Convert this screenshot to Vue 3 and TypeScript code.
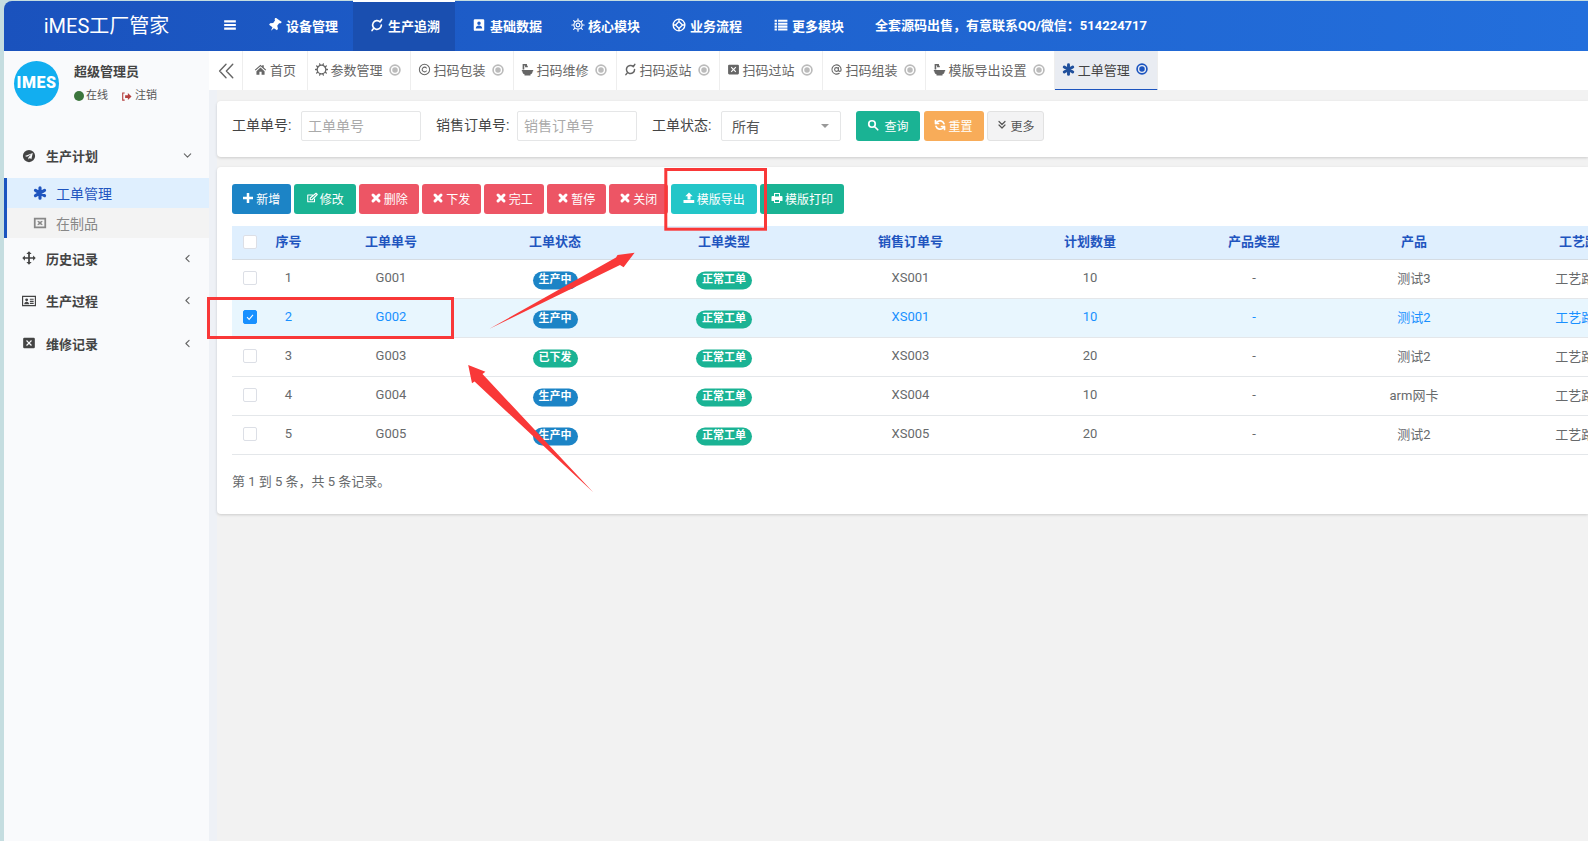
<script setup lang="ts">
import { h } from 'vue'

function cog(inner: number, ring: number, outer: number, n: number): string {
  const circle = (r: number) => `M${12 - r} 12a${r} ${r} 0 1 0 ${2 * r} 0a${r} ${r} 0 1 0 ${-2 * r} 0`
  let d = circle(ring) + (inner ? circle(inner) : '')
  for (let i = 0; i < n; i++) {
    const a = (i * 2 * Math.PI) / n
    d += `M${(12 + ring * Math.cos(a)).toFixed(2)} ${(12 + ring * Math.sin(a)).toFixed(2)}L${(12 + outer * Math.cos(a)).toFixed(2)} ${(12 + outer * Math.sin(a)).toFixed(2)}`
  }
  return d
}

const xCut = 'M8.500 7L12 10.500 15.500 7 17 8.500 13.500 12 17 15.500 15.500 17 12 13.500 8.500 17 7 15.500 10.500 12 7 8.500z'
const icons: Record<string, { d: string; sw?: number; t?: string }> = {
  pin: { d: 'M5.500 1h13v3l-2.500 1.500V11l4 3.500V17.500H13.500L12 24l-1.500-6.500H3.500V14.500l4-3.500V5.500L5.500 4z', t: 'rotate(35 12 12)' },
  notch: { d: 'M17.300 6.700A7.500 7.500 0 1 0 19.500 12M17.300 6.700L20 2.500M6.700 17.300L3.500 21.500', sw: 2.800 },
  book: { d: 'M5 2h14a2 2 0 0 1 2 2v16a2 2 0 0 1-2 2H5a2 2 0 0 1-2-2V4a2 2 0 0 1 2-2zM12 6a3 3 0 1 0 0 6 3 3 0 0 0 0-6zM6.500 18h11c0-3-2.500-5-5.500-5s-5.500 2-5.500 5z' },
  gear: { d: cog(3.2, 7, 10.5, 8), sw: 2 },
  sun: { d: cog(0, 8, 11, 10), sw: 2.400 },
  ring: { d: 'M2 12a10 10 0 1 0 20 0a10 10 0 1 0-20 0M12 6l6 6-6 6-6-6zM12 2v4M12 18v4M2 12h4M18 12h4', sw: 2.400 },
  list: { d: 'M1 3h4v3.500H1zM7 3h16v3.500H7zM1 8h4v3.500H1zM7 8h16v3.500H7zM1 13h4v3.500H1zM7 13h16v3.500H7zM1 18h4v3.500H1zM7 18h16v3.500H7z' },
  bars: { d: 'M2 4h20v3.800H2zM2 10.100h20v3.800H2zM2 16.200h20V20H2z' },
  home: { d: 'M12 3L1.500 12.500 3 14l9-8 9 8 1.500-1.500L18 8.500V4h-3v2zM4.500 15v6.500h5.500V16h4v5.500h5.500V15L12 8.500z' },
  copy: { d: 'M2.500 12a9.500 9.500 0 1 0 19 0a9.500 9.500 0 1 0-19 0M15.500 9.200a4.400 4.400 0 1 0 0 5.600', sw: 1.900 },
  bath: { d: 'M1.500 13h21v2.200h-1c0 3-1.500 5-4 5.600V23H6.500v-2.200c-2.500-.6-4-2.600-4-5.600h-1zM3 2h8v3h1.500v3h-5V4.800H6V12H3z' },
  win: { d: 'M4 3h16a2 2 0 0 1 2 2v14a2 2 0 0 1-2 2H4a2 2 0 0 1-2-2V5a2 2 0 0 1 2-2z' + xCut },
  wino: { d: 'M1.500 3h21v18h-21zM4.500 6v12h15V6zM8.500 8L12 10l3.500-2 1 1.500-2.500 2.500 2.500 2.500-1 1.500-3.500-2-3.500 2-1-1.500L10 12 7.500 9.500z' },
  at: { d: 'M15.500 12a3.500 3.500 0 1 1-7 0 3.500 3.500 0 0 1 7 0zM15.500 8.500V13a2.500 2.500 0 0 0 5 0v-1a8.500 8.500 0 1 0-3.500 6.900', sw: 2 },
  star: { d: 'M12 3v18M4.200 7.500l15.600 9M19.800 7.500l-15.600 9', sw: 5.400 },
  close: { d: 'M12 .5a11.500 11.500 0 1 0 0 23 11.500 11.500 0 0 0 0-23zM12 3.800a8.200 8.200 0 1 1 0 16.400 8.200 8.200 0 0 1 0-16.400zM12 6.500a5.500 5.500 0 1 0 0 11 5.500 5.500 0 0 0 0-11z' },
  plane: { d: 'M12 1.500a10.500 10.500 0 1 0 0 21 10.500 10.500 0 0 0 0-21zM18.500 7L5 12l3.500 1.200L16 9l-5 5v4l2.500-2.500 2.500 2z' },
  move: { d: 'M12 .5l4.500 4.500H13.500v5.500H19V7.500l4.500 4.500-4.500 4.500v-3H13.500V19h3L12 23.500 7.500 19h3v-5.500H5v3L.5 12 5 7.500v3h5.500V5h-3z' },
  card: { d: 'M0 3h24v18H0zM2 5v14h20V5zM8 7.500a2.500 2.500 0 1 0 0 5 2.500 2.500 0 0 0 0-5zM3.800 17.500c0-2.800 1.800-4.300 4.200-4.300s4.200 1.500 4.200 4.300zM13.500 8H20v2h-6.500zM13.500 11.500H20v2h-6.500zM13.500 15H20v2h-6.500z' },
  down: { d: 'M5 8.500l7 7 7-7', sw: 2.400 },
  left: { d: 'M15.500 5l-7 7 7 7', sw: 2.400 },
  dbl: { d: 'M12 3L3.500 12l8.500 9M21 3l-8.500 9 8.500 9', sw: 1.900 },
  plus: { d: 'M9.500 2h5v7.500H22v5h-7.500V22h-5v-7.500H2v-5h7.500z' },
  edit: { d: 'M17 14v5.500H3.500V6H13M20 2.500L22.500 5 12 15.500H8.500V12z', sw: 2.200 },
  times: { d: 'M6 6l12 12M18 6L6 18', sw: 6 },
  up: { d: 'M12 1l7.500 7.500h-4.500V15H9V8.500H4.500zM1 16h21.500v6H1z' },
  print: { d: 'M6 2h12v6h3a2 2 0 0 1 2 2v8h-5v4H6v-4H1v-8a2 2 0 0 1 2-2h3zM8 4v5h8V4zM8 16v4h8v-4z' },
  find: { d: 'M3.500 10a6.500 6.500 0 1 0 13 0a6.500 6.500 0 1 0-13 0M15 15l6.500 6.500', sw: 3.400 },
  sync: { d: 'M20 9.500A8.500 8.500 0 0 0 5.500 6.500L3.500 9M4 14.500a8.500 8.500 0 0 0 14.500 3L20.500 15M3 3v6h6M21 21v-6h-6', sw: 3.400 },
  dd: { d: 'M6 5l6 6 6-6M6 12l6 6 6-6', sw: 2.400 },
  out: { d: 'M8 3H2.500v18H8V18.500H5v-13h3zM9 9h6V4.500l8 7.500-8 7.500V15H9z' },
}

const Ico = (p: { n: string }) => {
  const i = icons[p.n]
  const attrs = i.sw
    ? { fill: 'none', stroke: 'currentColor', 'stroke-width': i.sw, 'stroke-linecap': 'round', 'stroke-linejoin': 'round' }
    : { fill: 'currentColor', 'fill-rule': 'evenodd' }
  return h('svg', { viewBox: '0 0 24 24', class: 'ic' }, [h('path', { d: i.d, transform: i.t, ...attrs })])
}

const navItems = [
  { icon: 'pin', text: '设备管理' },
  { icon: 'notch', text: '生产追溯', active: true },
  { icon: 'book', text: '基础数据' },
  { icon: 'gear', text: '核心模块', tight: true },
  { icon: 'ring', text: '业务流程' },
  { icon: 'list', text: '更多模块' },
]

const tabs = [
  { icon: 'home', text: '首页', home: true },
  { icon: 'sun', text: '参数管理' },
  { icon: 'copy', text: '扫码包装' },
  { icon: 'bath', text: '扫码维修' },
  { icon: 'notch', text: '扫码返站' },
  { icon: 'win', text: '扫码过站' },
  { icon: 'at', text: '扫码组装' },
  { icon: 'bath', text: '模版导出设置' },
  { icon: 'star', text: '工单管理', active: true },
]

const actions = [
  { icon: 'plus', text: '新增', kind: 'blue', w: 58.5 },
  { icon: 'edit', text: '修改', kind: 'green', w: 61.5 },
  { icon: 'times', text: '删除', kind: 'red', w: 59.5 },
  { icon: 'times', text: '下发', kind: 'red', w: 58.5 },
  { icon: 'times', text: '完工', kind: 'red', w: 59.5 },
  { icon: 'times', text: '暂停', kind: 'red', w: 58.5 },
  { icon: 'times', text: '关闭', kind: 'red', w: 58.5 },
  { icon: 'up', text: '模版导出', kind: 'teal', w: 85.5 },
  { icon: 'print', text: '模版打印', kind: 'green', w: 84 },
]

const columns = ['序号', '工单单号', '工单状态', '工单类型', '销售订单号', '计划数量', '产品类型', '产品', '工艺路线']
const colClasses = ['c1', 'c2', 'c3', 'c4', 'c5', 'c6', 'c7', 'c8', 'c9']

const rows = [
  { no: 1, code: 'G001', status: '生产中', type: '正常工单', order: 'XS001', qty: 10, ptype: '-', product: '测试3', route: '工艺路线1' },
  { no: 2, code: 'G002', status: '生产中', type: '正常工单', order: 'XS001', qty: 10, ptype: '-', product: '测试2', route: '工艺路线1', selected: true },
  { no: 3, code: 'G003', status: '已下发', type: '正常工单', order: 'XS003', qty: 20, ptype: '-', product: '测试2', route: '工艺路线1' },
  { no: 4, code: 'G004', status: '生产中', type: '正常工单', order: 'XS004', qty: 10, ptype: '-', product: 'arm网卡', route: '工艺路线1' },
  { no: 5, code: 'G005', status: '生产中', type: '正常工单', order: 'XS005', qty: 20, ptype: '-', product: '测试2', route: '工艺路线1' },
]
</script>

<template>
  <div class="page">
    <header class="topbar">
      <div class="brand">iMES工厂管家</div>
      <div class="burger"><Ico n="bars" /></div>
      <nav class="nav">
        <a v-for="item in navItems" :key="item.text" class="nav-item" :class="{ active: item.active, tight: item.tight }">
          <Ico :n="item.icon" />
          <span>{{ item.text }}</span>
        </a>
        <span class="contact">全套源码出售，有意联系QQ/微信：514224717</span>
      </nav>
    </header>

    <div class="body">
      <aside class="sidebar">
        <div class="user">
          <div class="avatar">IMES</div>
          <div class="user-info">
            <div class="user-name">超级管理员</div>
            <div class="user-meta">
              <i class="dot"></i><span>在线</span>
              <span class="logout"><Ico n="out" /></span><span>注销</span>
            </div>
          </div>
        </div>

        <div class="menu">
          <div class="menu-head">
            <Ico n="plane" /><span class="menu-title">生产计划</span><span class="chev"><Ico n="down" /></span>
          </div>
          <div class="submenu">
            <div class="sub-item current"><Ico n="star" /><span>工单管理</span></div>
            <div class="sub-item"><Ico n="wino" /><span>在制品</span></div>
          </div>
          <div class="menu-head">
            <Ico n="move" /><span class="menu-title">历史记录</span><span class="chev"><Ico n="left" /></span>
          </div>
          <div class="menu-head">
            <Ico n="card" /><span class="menu-title">生产过程</span><span class="chev"><Ico n="left" /></span>
          </div>
          <div class="menu-head">
            <Ico n="win" /><span class="menu-title">维修记录</span><span class="chev"><Ico n="left" /></span>
          </div>
        </div>
      </aside>

      <main class="main">
        <div class="tabbar">
          <div class="collapse"><Ico n="dbl" /></div>
          <div v-for="tab in tabs" :key="tab.text" class="tab" :class="{ active: tab.active, home: tab.home }">
            <Ico :n="tab.icon" />
            <span class="tab-text">{{ tab.text }}</span>
            <span v-if="!tab.home" class="tab-close"><Ico n="close" /></span>
          </div>
        </div>

        <div class="content">
          <section class="card search">
            <label class="lab first">工单单号:</label>
            <input class="field" placeholder="工单单号" />
            <label class="lab">销售订单号:</label>
            <input class="field" placeholder="销售订单号" />
            <label class="lab">工单状态:</label>
            <div class="field select"><span>所有</span><i class="caret"></i></div>
            <div class="search-btns">
              <button class="btn green s-query"><Ico n="find" /><span>查询</span></button>
              <button class="btn orange s-reset"><Ico n="sync" /><span>重置</span></button>
              <button class="btn plain s-more"><Ico n="dd" /><span>更多</span></button>
            </div>
          </section>

          <section class="card list-card">
            <div class="toolbar">
              <button v-for="a in actions" :key="a.text" class="btn" :class="a.kind" :style="{ width: a.w + 'px' }">
                <Ico :n="a.icon" /><span>{{ a.text }}</span>
              </button>
            </div>

            <table class="grid">
              <colgroup>
                <col class="c0" />
                <col v-for="c in colClasses" :key="c" :class="c" />
              </colgroup>
              <thead>
                <tr>
                  <th><span class="check"></span></th>
                  <th v-for="c in columns" :key="c">{{ c }}</th>
                </tr>
              </thead>
              <tbody>
                <tr v-for="r in rows" :key="r.no" :class="{ selected: r.selected }">
                  <td>
                    <span class="check" :class="{ on: r.selected }">
                      <svg v-if="r.selected" viewBox="0 0 14 14" class="tick"><path d="M3.500 7.200l2.500 2.600 4.500-5.300" /></svg>
                    </span>
                  </td>
                  <td>{{ r.no }}</td>
                  <td>{{ r.code }}</td>
                  <td><span class="badge" :class="r.status === '已下发' ? 'b-green' : 'b-blue'">{{ r.status }}</span></td>
                  <td><span class="badge b-green">{{ r.type }}</span></td>
                  <td>{{ r.order }}</td>
                  <td>{{ r.qty }}</td>
                  <td>{{ r.ptype }}</td>
                  <td>{{ r.product }}</td>
                  <td>{{ r.route }}</td>
                </tr>
              </tbody>
            </table>

            <div class="summary">第 1 到 5 条，共 5 条记录。</div>
          </section>
        </div>
      </main>
    </div>

    <svg class="marks" viewBox="0 0 1588 841" width="1588" height="841">
      <rect x="665.800" y="169.500" width="99.700" height="59.700" />
      <rect x="208.500" y="298.500" width="244" height="39" />
      <polygon class="arrow" points="489,329 616,257.500 617.500,255 634.600,252.700 623.600,267.300 620,265" />
      <polygon class="arrow" points="593.200,492.300 474.500,381.500 472,383.300 468.200,365 485.400,371.700 482.500,374" />
    </svg>
  </div>
</template>

<style>
html,
body {
  margin: 0;
  overflow: hidden;
}
</style>

<style scoped>
.page {
  position: relative;
  width: 1588px;
  height: 841px;
  box-sizing: border-box;
  padding: 1px 0 0 4px;
  display: flex;
  flex-direction: column;
  overflow: hidden;
  background: #c5dde0;
  font-family: Roboto, "Noto Sans CJK SC", sans-serif;
  font-size: 13px;
  color: #676a6c;
}
.ic {
  width: 14px;
  height: 14px;
  flex: none;
  display: block;
}

/* top bar */
.topbar {
  height: 50px;
  flex: none;
  display: flex;
  align-items: stretch;
  border-top-left-radius: 8px;
  background: linear-gradient(90deg, #1a52bd 0%, #1f63cf 50%, #236fdc 100%);
  color: #fff;
}
.brand {
  width: 205px;
  flex: none;
  text-align: center;
  line-height: 50px;
  font-size: 20px;
}
.burger {
  width: 42px;
  flex: none;
  display: flex;
  align-items: center;
  padding: 0 0 2px 14px;
  box-sizing: border-box;
}
.burger .ic {
  width: 14px;
  height: 14px;
}
.nav {
  display: flex;
  align-items: stretch;
  font-weight: 700;
}
.nav-item {
  display: flex;
  align-items: center;
  gap: 4px;
  padding: 0 15px 3px 17px;
  border-top: 2px solid transparent;
  margin-top: -1px;
}
.nav-item.tight {
  padding-left: 14px;
  gap: 3px;
}
.nav-item.active {
  border-top-color: #fff;
  background: #1a4fb0;
}
.contact {
  display: flex;
  align-items: center;
  margin-left: 16px;
  padding-bottom: 3px;
  white-space: nowrap;
}

/* frame */
.body {
  flex: 1;
  min-height: 0;
  display: flex;
}
.sidebar {
  width: 205px;
  flex: none;
  background: #f9fafc;
}
.user {
  display: flex;
  padding: 10px 0 0 10px;
  height: 74px;
  box-sizing: border-box;
}
.avatar {
  width: 45px;
  height: 45px;
  border-radius: 50%;
  background: #12aef0;
  color: #fff;
  font-weight: 900;
  font-size: 16px;
  letter-spacing: 0.5px;
  line-height: 44px;
  text-align: center;
  flex: none;
}
.user-info {
  margin-left: 15px;
  padding-top: 1px;
}
.user-name {
  font-size: 13px;
  font-weight: 700;
  color: #444;
  line-height: 20px;
}
.user-meta {
  display: flex;
  align-items: center;
  margin-top: 6px;
  font-size: 11px;
  color: #555;
  line-height: 16px;
}
.dot {
  width: 10px;
  height: 10px;
  border-radius: 50%;
  background: #3c763d;
  margin-right: 2px;
}
.logout {
  color: #b5403f;
  margin: 0 3px 0 13px;
}
.logout .ic {
  width: 11px;
  height: 11px;
}
.menu {
  padding-top: 10px;
}
.menu-head {
  height: 42.5px;
  display: flex;
  align-items: center;
  padding-left: 18px;
  padding-bottom: 1px;
  box-sizing: border-box;
  color: #444;
  font-weight: 700;
}
.menu-title {
  margin-left: 10px;
  flex: 1;
}
.chev {
  margin-right: 16px;
  color: #666;
}
.chev .ic {
  width: 11px;
  height: 11px;
}
.submenu {
  border-left: 3px solid #1b54bf;
}
.sub-item {
  height: 30px;
  display: flex;
  align-items: center;
  gap: 9px;
  padding-left: 26px;
  font-size: 14px;
  color: #888;
  background: #f3f3f3;
}
.sub-item.current {
  background: #dfeffe;
  color: #1f55bf;
}
.main {
  flex: 1;
  min-width: 0;
  display: flex;
  flex-direction: column;
  background: #f2f2f2;
}

/* tabs */
.tabbar {
  height: 39px;
  flex: none;
  display: flex;
  background: #fff;
}
.collapse {
  width: 34px;
  box-sizing: border-box;
  display: flex;
  align-items: center;
  justify-content: center;
  border-right: 1px solid #eee;
  color: #666;
}
.collapse .ic {
  width: 18px;
  height: 18px;
}
.tab {
  display: flex;
  align-items: center;
  height: 39px;
  box-sizing: border-box;
  padding: 0 9px 2px 6.500px;
  border-right: 1px solid #eee;
  color: #666;
  white-space: nowrap;
}
.tab .ic {
  width: 13px;
  height: 13px;
}
.tab.home {
  padding: 0 11px 2px;
}
.tab-text {
  margin-left: 3px;
}
.tab-close {
  margin-left: 6.500px;
  color: #bbb;
}
.tab-close .ic {
  width: 12px;
  height: 12px;
}
.tab.active {
  height: 40px;
  background: #e9ecf2;
  border-bottom: 2px solid #1b54bf;
  color: #444;
}
.tab.active > .ic {
  color: #1f4f9c;
}
.tab.active .tab-close {
  color: #1b54bf;
}

/* content */
.content {
  flex: 1;
  padding: 11px 0 0 8px;
  background: linear-gradient(90deg, #eef1f6 8px, #f2f2f2 8px);
}
.card {
  background: #fff;
  border-radius: 4px 0 0 4px;
  box-shadow: 0 1px 3px rgba(0, 0, 0, 0.16);
}
.search {
  height: 56px;
  box-sizing: border-box;
  display: flex;
  align-items: flex-start;
  padding: 10px 0 0 15px;
}
.lab {
  font-size: 14px;
  line-height: 29px;
  color: #444;
  margin-left: 15px;
  width: 57px;
  margin-right: 12px;
  white-space: nowrap;
}
.lab:nth-of-type(2) {
  width: 71px;
  margin-right: 10px;
}
.lab.first {
  margin-left: 0;
}
.field {
  width: 120px;
  height: 30px;
  box-sizing: border-box;
  border: 1px solid #e5e6e7;
  border-radius: 2px;
  padding: 0 6px 1px;
  font: inherit;
  font-size: 14px;
  color: #555;
  background: #fff;
  outline: none;
}
.field::placeholder {
  color: #aaa;
}
.select {
  display: flex;
  align-items: center;
  justify-content: space-between;
  padding: 0 11px 0 10px;
}
.caret {
  border-left: 4px solid transparent;
  border-right: 4px solid transparent;
  border-top: 4px solid #999;
}
.search-btns {
  display: flex;
  gap: 3.500px;
  margin-left: 15px;
}
.btn {
  height: 30px;
  box-sizing: border-box;
  border: 1px solid transparent;
  border-radius: 3px;
  padding: 0 0 2px;
  display: flex;
  align-items: center;
  justify-content: center;
  gap: 2px;
  font: inherit;
  font-size: 12px;
  color: #fff;
}
.btn .ic {
  width: 12px;
  height: 12px;
}
.s-query {
  width: 64px;
  gap: 5px;
}
.s-reset {
  width: 60px;
}
.s-more {
  width: 57px;
}
.blue {
  background: #1c84c6;
}
.green {
  background: #1ab394;
}
.red {
  background: #ed5565;
}
.teal {
  background: #23c6c8;
}
.orange {
  background: #f8ac59;
}
.plain {
  background: #f3f3f4;
  border-color: #e2e2e2;
  color: #555;
}
.list-card {
  margin-top: 10px;
  height: 347px;
  box-sizing: border-box;
  padding: 17px 0 0 15px;
  overflow: hidden;
}
.toolbar {
  display: flex;
  gap: 3.500px;
  height: 30px;
}
.grid {
  margin-top: 12px;
  width: 1448px;
  table-layout: fixed;
  border-collapse: collapse;
}
.c0 { width: 36px; }
.c1 { width: 41px; }
.c2 { width: 164px; }
.c3 { width: 164px; }
.c4 { width: 174px; }
.c5 { width: 199px; }
.c6 { width: 160px; }
.c7 { width: 168px; }
.c8 { width: 152px; }
.c9 { width: 190px; }
.grid th {
  height: 33px;
  padding: 0 0 3px;
  box-sizing: border-box;
  background: #dfeffe;
  color: #1f55bf;
  font-weight: 700;
  text-align: center;
  border-bottom: 1px solid #d5dce3;
}
.grid td {
  height: 39px;
  padding: 0 0 2px;
  text-align: center;
  border-bottom: 1px solid #e4e7ea;
  box-sizing: border-box;
  white-space: nowrap;
}
.grid tr.selected td {
  background: #e8f6fe;
  color: #1890ff;
}
.check {
  display: inline-block;
  width: 14px;
  height: 14px;
  box-sizing: border-box;
  border: 1px solid #dcdfe6;
  border-radius: 2px;
  background: #fff;
  vertical-align: middle;
}
.check.on {
  background: #1890ff;
  border-color: #1890ff;
}
.tick {
  display: block;
  width: 12px;
  height: 12px;
  fill: none;
  stroke: #fff;
  stroke-width: 1.200;
}
.badge {
  display: inline-block;
  padding: 0 6px;
  height: 18px;
  line-height: 16px;
  border-radius: 9px;
  color: #fff;
  font-size: 11px;
  font-weight: 700;
  vertical-align: middle;
  transform: translateY(2.500px);
}
.b-blue {
  background: #1c84c6;
}
.b-green {
  background: #1ab394;
}
.summary {
  margin-top: 17px;
  line-height: 20px;
  color: #676a6c;
}

/* annotations drawn over the screenshot */
.marks {
  position: absolute;
  left: 0;
  top: 0;
  pointer-events: none;
}
.marks rect {
  fill: none;
  stroke: #f93838;
  stroke-width: 3;
}
.marks .arrow {
  fill: #f93838;
}
</style>
